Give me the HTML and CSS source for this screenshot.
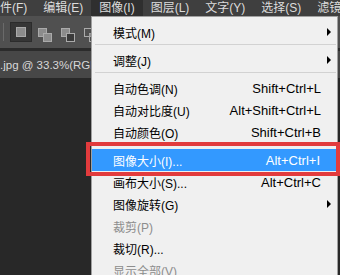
FILE: index.html
```html
<!DOCTYPE html>
<html lang="zh-CN">

<head>
    <meta charset="UTF-8">
    <title>图像菜单</title>
    <link rel="stylesheet" href="styles.css">
</head>

<body>
    <div class="menubar">
        <span class="menubar-item">文件(F)</span>
        <span class="menubar-item">编辑(E)</span>
        <span class="menubar-item active">图像(I)</span>
        <span class="menubar-item">图层(L)</span>
        <span class="menubar-item">文字(Y)</span>
        <span class="menubar-item">选择(S)</span>
        <span class="menubar-item">滤镜(T)</span>
    </div>

    <div class="toolbar">
        <span class="tool-sep"></span>
        <span class="tool-btn selected"><span class="sq"></span></span>
        <svg class="tool-icon" width="14" height="14" viewBox="0 0 14 14">
            <rect x="0.5" y="0.5" width="8" height="8" fill="#8c8c8c" stroke="#aaa"/>
            <rect x="5.5" y="5.5" width="8" height="8" fill="#8c8c8c" stroke="#aaa"/>
        </svg>
        <svg class="tool-icon" width="14" height="14" viewBox="0 0 14 14">
            <rect x="0.5" y="0.5" width="8" height="8" fill="#8c8c8c" stroke="#aaa"/>
            <rect x="5.5" y="5.5" width="8" height="8" fill="#3a3a3a" stroke="#aaa"/>
        </svg>
        <svg class="tool-icon" width="14" height="14" viewBox="0 0 14 14">
            <rect x="0.5" y="0.5" width="8" height="8" fill="none" stroke="#aaa"/>
            <rect x="5.5" y="5.5" width="8" height="8" fill="none" stroke="#aaa"/>
            <rect x="5.5" y="5.5" width="3" height="3" fill="#8c8c8c"/>
        </svg>
    </div>

    <div class="tabbar">
        <span class="tab-title">.jpg @ 33.3%(RGB/8)</span>
    </div>

    <!-- dropdown of 图像 menu -->
    <div class="dropdown">
        <div class="item"><span class="label">模式(M)</span><span class="arrow"></span></div>
        <div class="sep"></div>
        <div class="item"><span class="label">调整(J)</span><span class="arrow"></span></div>
        <div class="sep"></div>
        <div class="item"><span class="label">自动色调(N)</span><span class="key">Shift+Ctrl+L</span></div>
        <div class="item"><span class="label">自动对比度(U)</span><span class="key">Alt+Shift+Ctrl+L</span></div>
        <div class="item"><span class="label">自动颜色(O)</span><span class="key">Shift+Ctrl+B</span></div>
        <div class="sep"></div>
        <div class="item hover"><span class="label">图像大小(I)...</span><span class="key">Alt+Ctrl+I</span></div>
        <div class="item"><span class="label">画布大小(S)...</span><span class="key">Alt+Ctrl+C</span></div>
        <div class="item"><span class="label">图像旋转(G)</span><span class="arrow"></span></div>
        <div class="item disabled"><span class="label">裁剪(P)</span></div>
        <div class="item"><span class="label">裁切(R)...</span></div>
        <div class="item disabled"><span class="label">显示全部(V)</span></div>
    </div>

    <div class="highlight-box"></div>
</body>

</html>
```

FILE: styles.css
```css
* {
    box-sizing: border-box;
    margin: 0;
    padding: 0;
}

body {
    width: 340px;
    height: 275px;
    overflow: hidden;
    position: relative;
    background-color: #282828;
    font-family: "Liberation Sans", "Noto Sans CJK SC", sans-serif;
    font-size: 12px;
}

.menubar {
    display: flex;
    height: 16px;
    margin-left: -20px;
    background-color: #3f3f3f;
    white-space: nowrap;
}

.menubar-item {
    padding: 0 8px;
    line-height: 16px;
    color: #dcdcdc;
}

.menubar-item.active {
    background-color: #2f2f2f;
}

.toolbar {
    display: flex;
    align-items: center;
    height: 32px;
    padding-left: 3px;
    background-color: #505050;
}

.tool-sep {
    width: 1px;
    height: 18px;
    background-color: #6a6a6a;
    margin-right: 6px;
}

.tool-btn {
    display: flex;
    align-items: center;
    justify-content: center;
    width: 22px;
    height: 20px;
    margin-right: 6px;
}

.tool-btn.selected {
    background-color: #363636;
    border: 1px solid #2c2c2c;
}

.sq {
    width: 10px;
    height: 10px;
    background-color: #8c8c8c;
    border: 1px solid #aaa;
}

.tool-icon {
    margin-right: 9px;
    margin-top: 5px;
}

.tabbar {
    display: flex;
    align-items: center;
    height: 30px;
    border-top: 3px solid #2b2b2b;
    background-color: #474747;
}

.tab-title {
    margin-left: 0;
    color: #d8d8d8;
    font-size: 11.5px;
    white-space: nowrap;
}

/* dropdown menu */
.dropdown {
    position: absolute;
    left: 91px;
    top: 16px;
    width: 247px;
    height: 270px;
    padding-top: 4px;
    background-color: #f0f0f0;
    border: 1px solid #a0a0a0;
}

.item {
    display: flex;
    align-items: center;
    height: 22px;
    padding: 0 6px 0 21px;
    color: #000;
    white-space: nowrap;
}

.item .label {
    flex: 1;
}

.item .key {
    margin-right: 10px;
    font-size: 13px;
}

.item .arrow {
    width: 0;
    height: 0;
    border-left: 4px solid #000;
    border-top: 4px solid transparent;
    border-bottom: 4px solid transparent;
}

.item.hover {
    background-color: #3399ff;
    color: #fff;
    margin-right: 1px;
}

.item.disabled {
    color: #8d8d8d;
}

.sep {
    height: 6px;
    margin-left: 3px;
    margin-right: 1px;
    padding-top: 1px;
}

.sep::before {
    content: "";
    display: block;
    height: 1px;
    background-color: #d2d2d2;
}

.highlight-box {
    position: absolute;
    left: 86px;
    top: 142px;
    width: 254px;
    height: 34px;
    border: 4px solid #e23b3d;
}
```
